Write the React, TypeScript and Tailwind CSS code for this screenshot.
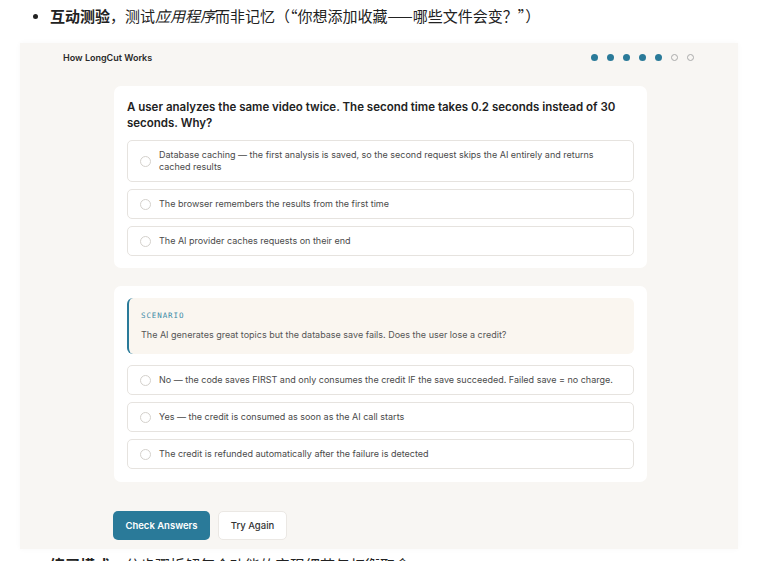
import React from "react";

const q1 = [
  "Database caching — the first analysis is saved, so the second request skips the AI entirely and returns cached results",
  "The browser remembers the results from the first time",
  "The AI provider caches requests on their end",
];

const q2 = [
  "No — the code saves FIRST and only consumes the credit IF the save succeeded. Failed save = no charge.",
  "Yes — the credit is consumed as soon as the AI call starts",
  "The credit is refunded automatically after the failure is detected",
];

const Option = ({ text }: { text: string }) => (
  <div className="flex items-center gap-[8px] rounded-[5px] border border-[#e6e3df] bg-white pl-[12px] pr-[18px] py-[8px] min-h-[30px]">
    <span className="shrink-0 w-[11px] h-[11px] rounded-full border border-[#d4d1cc]" />
    <span className="text-[9px] leading-[12px] text-[#4a4a4a]">{text}</span>
  </div>
);

const App = () => {
  const dots = [true, true, true, true, true, false, false];

  return (
    <div className="w-[758px] h-[561px] overflow-hidden bg-white" style={{ fontFamily: "Inter, 'Noto Sans CJK SC', sans-serif" }}>
      <div className="h-[43px] flex items-start pl-[33px] pt-[5px] text-[15px] text-[#222] font-['Noto_Sans_CJK_SC',sans-serif]">
        <span className="mt-[9px] mr-[12px] w-[5px] h-[5px] rounded-full bg-[#222]" />
        <span>
          <b className="font-semibold">互动测验</b>，测试<i>应用程序</i>而非记忆（“你想添加收藏——哪些文件会变？”）
        </span>
      </div>

      <div className="mx-[20px] h-[506px] bg-[#f8f6f3] shadow-[0_0_6px_rgba(0,0,0,0.03)]">
        <div className="flex items-center justify-between pl-[43px] pr-[44px] pt-[1px] h-[28px]">
          <span className="text-[9px] font-semibold text-[#2a2a2a]">How LongCut Works</span>
          <div className="flex items-center gap-[9px]">
            {dots.map((on, i) =>
              on ? (
                <span key={i} className="w-[7px] h-[7px] rounded-full bg-[#2a7a99]" />
              ) : (
                <span key={i} className="w-[7px] h-[7px] rounded-full border border-[#aaa]" />
              )
            )}
          </div>
        </div>

        <div className="ml-[94px] w-[533px] mt-[15px] flex flex-col">
          <div className="bg-white rounded-[7px] px-[13px] pt-[13px] pb-[12px]">
            <p className="text-[11.5px] leading-[16px] font-semibold text-[#222] mb-[9px]">
              A user analyzes the same video twice. The second time takes 0.2 seconds instead of 30 seconds. Why?
            </p>
            <div className="flex flex-col gap-[7px]">
              {q1.map((t) => (
                <Option key={t} text={t} />
              ))}
            </div>
          </div>

          <div className="bg-white rounded-[7px] px-[13px] pt-[12px] pb-[13px] mt-[18px]">
            <div className="rounded-[6px] border-l-2 border-[#2a7a99] bg-[#faf6f0] pl-[12px] pt-[12px] pb-[13px] mb-[11px]">
              <div className="text-[7.5px] tracking-[0.12em] text-[#3a8aa6] font-['DejaVu_Sans_Mono',monospace]">SCENARIO</div>
              <div className="mt-[8px] text-[9px] leading-[12px] text-[#555]">
                The AI generates great topics but the database save fails. Does the user lose a credit?
              </div>
            </div>
            <div className="flex flex-col gap-[7px]">
              {q2.map((t) => (
                <Option key={t} text={t} />
              ))}
            </div>
          </div>

          <div className="flex gap-[8px] mt-[29px] -ml-[1px]">
            <button className="h-[29px] w-[97px] rounded-[5px] bg-[#2a7a99] text-white text-[9.5px] font-semibold">
              Check Answers
            </button>
            <button className="h-[29px] w-[69px] rounded-[5px] bg-white border border-[#ebe8e4] text-[#333] text-[9.5px] font-medium">
              Try Again
            </button>
          </div>
        </div>
      </div>

      <div className="flex items-start pl-[33px] pt-[6px] text-[15px] leading-[20px] text-[#222] font-['Noto_Sans_CJK_SC',sans-serif]">
        <span className="mt-[8px] mr-[12px] w-[5px] h-[5px] rounded-full bg-[#222]" />
        <span>
          <b className="font-semibold">练习模式</b>，分步骤拆解每个功能的实现细节与权衡取舍
        </span>
      </div>
    </div>
  );
};

export default App;
